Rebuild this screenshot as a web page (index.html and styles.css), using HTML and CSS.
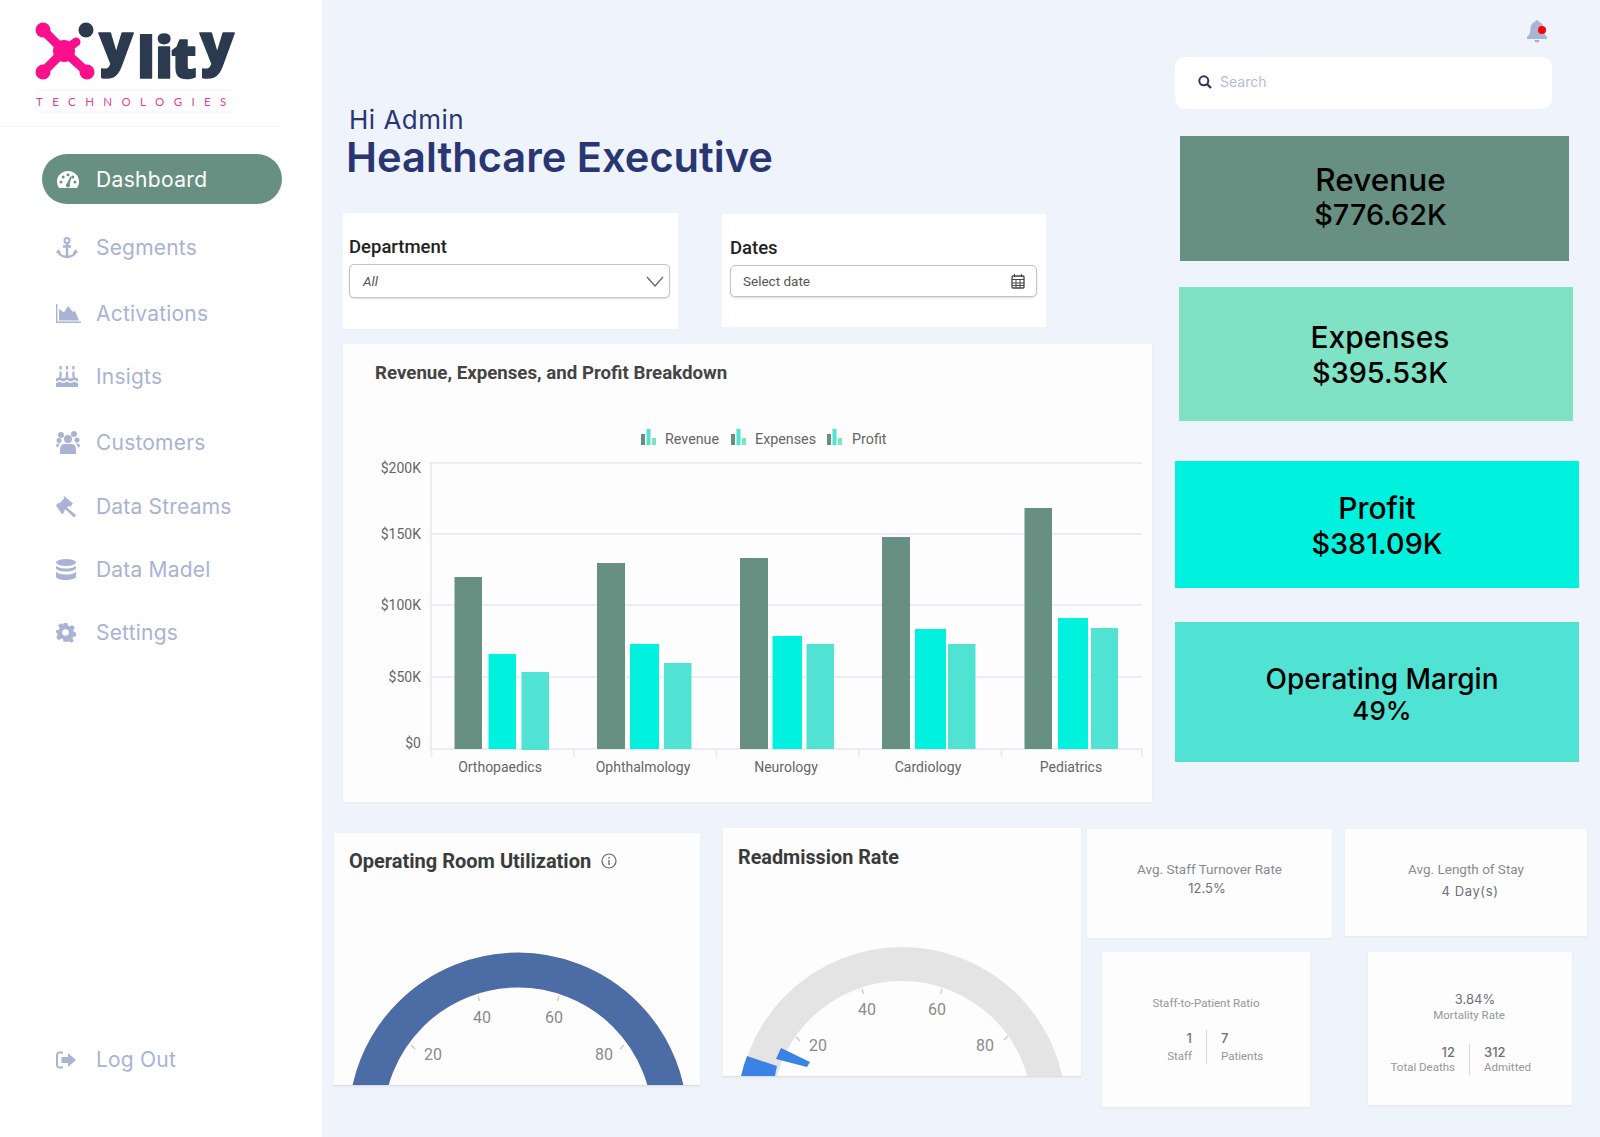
FILE: index.html
```html
<!DOCTYPE html>
<html lang="en">
<head>
  <meta charset="UTF-8">
  <meta name="viewport" content="width=device-width, initial-scale=1.0">
  <title>Healthcare Executive</title>
  <link rel="stylesheet" href="styles.css">
</head>
<body>
  <aside class="sidebar">
    <div class="logo">
      <svg class="logo-art" viewBox="0 0 280 126" width="280" height="126">
        <g stroke="#fb0f8d" stroke-linecap="round" fill="none" stroke-width="9">
          <path d="M43 30 L64 51 L43 72"/>
          <path d="M87 72 L64 51 L76 42"/>
        </g>
        <g fill="#fb0f8d">
          <circle cx="64" cy="51" r="11"/>
          <circle cx="43" cy="30" r="7.500"/>
          <circle cx="43" cy="72" r="7.500"/>
          <circle cx="87" cy="72" r="7.500"/>
        </g>
        <circle cx="86" cy="30" r="7.500" fill="#2c3a50"/>
        <text class="logo-word" x="99 137 155 171 200" y="64 78 78 78 64">ylity</text>
        <path d="M36 90 H232 M36 112 H232" stroke="#f8eef4" stroke-width="1"/>
        <text class="logo-sub" x="36" y="106">TECHNOLOGIES</text>
      </svg>
    </div>
    <ul class="nav">
      <li class="nav-item active">
        <svg class="ico" viewBox="0 0 22 17" width="22" height="17"><path fill="#fff" d="M11 0C5 0 0 4.500 0 10.500 0 12.700.7 14.800 1.800 16.500c.2.300.5.500.9.500h16.600c.4 0 .7-.2.900-.5 1.100-1.700 1.800-3.800 1.800-6C22 4.500 17 0 11 0z"/><g fill="#689082"><circle cx="4" cy="11" r="1.500"/><circle cx="6.200" cy="6" r="1.500"/><circle cx="11" cy="3.800" r="1.500"/><circle cx="15.800" cy="6" r="1.500"/><circle cx="18" cy="11" r="1.500"/><path d="M13.300 5.500l1.300.5-2 7.200a2 2 0 1 1-2.600-.6z"/></g></svg>
        <span>Dashboard</span>
      </li>
      <li class="nav-item">
        <svg class="ico" viewBox="0 0 22 22" width="22" height="22"><circle cx="11" cy="3.500" r="2.500" fill="none" stroke="currentColor" stroke-width="2"/><path fill="none" stroke="currentColor" stroke-width="2.400" d="M11 6v14M7 9.500h8M2.500 14c.5 3.700 4 6 8.500 6s8-2.300 8.500-6"/><path fill="currentColor" d="M0 16l2-4 3 3.500zM22 16l-2-4-3 3.500z"/></svg>
        <span>Segments</span>
      </li>
      <li class="nav-item">
        <svg class="ico" viewBox="0 0 25 19" width="25" height="19"><path fill="none" stroke="currentColor" stroke-width="1.400" d="M.7 0v18.300H25"/><path fill="currentColor" d="M3 16.500V5l5 3.500L12 2l5 6 2-1 4 9.500z"/></svg>
        <span>Activations</span>
      </li>
      <li class="nav-item">
        <svg class="ico" viewBox="0 0 22 21" width="22" height="21"><path fill="currentColor" d="M0 12.500c2 0 2-1.500 3.700-1.500s1.800 1.500 3.600 1.500 1.900-1.500 3.700-1.500 1.900 1.500 3.700 1.500 1.900-1.500 3.600-1.500 1.700 1.500 3.700 1.500v3c-2 0-2-1.500-3.700-1.500s-1.800 1.500-3.600 1.500-1.900-1.500-3.700-1.500-1.900 1.500-3.700 1.500-1.900-1.500-3.600-1.500S2 15.500 0 15.500zM0 17c2 0 2-1.300 3.700-1.300S5.500 17 7.300 17s1.900-1.300 3.700-1.300 1.900 1.300 3.700 1.300 1.900-1.300 3.600-1.300S20 17 22 17v4H0zM3.500 5.500h2.200V11H3.500zM9.900 5.500h2.200V11H9.900zM16.300 5.500h2.200V11h-2.200zM3.500 0h2.200v3.500H3.500zM9.900 0h2.200v3.500H9.900zM16.300 0h2.200v3.500h-2.200z"/></svg>
        <span>Insigts</span>
      </li>
      <li class="nav-item">
        <svg class="ico" viewBox="0 0 24 23" width="24" height="23"><g fill="currentColor"><circle cx="5" cy="4" r="3"/><circle cx="18" cy="3" r="3"/><circle cx="12" cy="8" r="4"/><circle cx="3" cy="9.500" r="2.500"/><circle cx="21" cy="9" r="2.500"/><path d="M4 23v-5c0-3 2-5 4-5h8c2 0 4 2 4 5v5c-2 .5-14 .5-16 0zM0 15c0-1.500 1-2.500 2.500-2.500h2c-1.500 1-2.500 2.500-2.500 4.500zM24 15c0-1.500-1-2.500-2.500-2.500h-2c1.500 1 2.500 2.500 2.500 4.500z"/></g></svg>
        <span>Customers</span>
      </li>
      <li class="nav-item">
        <svg class="ico" viewBox="0 0 22 21" width="22" height="21"><path fill="currentColor" d="M8 0l9 7.500-3 3.500-1.500-1-1.500 1.600 9 7.500-2 2.400-8.700-8.200-1.300 1.400.7 1-2.700 2.500L0 9.500l2.500-2.700 1 .7L8.500 2 7.500 1z"/></svg>
        <span>Data Streams</span>
      </li>
      <li class="nav-item">
        <svg class="ico" viewBox="0 0 20 21" width="20" height="21"><g fill="currentColor"><ellipse cx="10" cy="3.500" rx="10" ry="3.500"/><path d="M0 6c0 2 4.500 3.500 10 3.500S20 8 20 6v3c0 2-4.500 3.500-10 3.500S0 11 0 9zM0 12c0 2 4.500 3.500 10 3.500S20 14 20 12v5.500c0 2-4.500 3.500-10 3.500S0 19.500 0 17.500z"/></g></svg>
        <span>Data Madel</span>
      </li>
      <li class="nav-item">
        <svg class="ico" viewBox="0 0 20 20" width="20" height="20"><path fill="currentColor" fill-rule="evenodd" d="M8 0h4l.6 3 1.900.8L17 2.100 19.800 5l-1.700 2.500.8 1.900 2.100.6v4l-3 .6-.8 1.900 1.700 2.500L16 20.800l-2.500-1.700-1.500.9-.2-.2H8l-.6-2.600-1.900-.8-2.500 1.700L.2 15l1.700-2.500-.8-1.900L0 10V7.500l3-.5.800-1.900L2.100 2.600 5 .2l2.500 1.700z M10 6.500a3.500 3.500 0 1 0 0 7 3.500 3.500 0 0 0 0-7z" transform="scale(.95)"/></svg>
        <span>Settings</span>
      </li>
    </ul>
    <div class="nav-item logout">
      <svg class="ico" viewBox="0 0 20 20" width="20" height="20"><path fill="none" stroke="currentColor" stroke-width="2" d="M7 2.500H3.500A2.500 2.500 0 0 0 1 5v10a2.500 2.500 0 0 0 2.500 2.500H7"/><path fill="currentColor" d="M12 3l8 7-8 7v-4H5.500V7H12z"/></svg>
      <span>Log Out</span>
    </div>
  </aside>

  <main class="main">
    <div class="upper">
      <section class="left-col">
        <div class="greeting">
          <p class="hi">Hi Admin</p>
          <h1>Healthcare Executive</h1>
        </div>
        <div class="filters">
          <div class="filter filter-dept">
            <label>Department</label>
            <div class="field field-dept">
              <em>All</em>
              <svg viewBox="0 0 18 11" width="18" height="11"><path d="M1 1l8 9 8-9" fill="none" stroke="#666" stroke-width="1.300"/></svg>
            </div>
          </div>
          <div class="filter filter-date">
            <label>Dates</label>
            <div class="field field-date">
              <span>Select date</span>
              <svg viewBox="0 0 14 15" width="14" height="15"><rect x="1" y="2" width="12" height="12" rx="1" fill="none" stroke="#444" stroke-width="1.300"/><path d="M1 5.500h12M3.500 0v3M10.500 0v3M5 5.500V14M9 5.500V14M1 9h12M1 11.500h12" stroke="#444" stroke-width="1"/></svg>
            </div>
          </div>
        </div>
        <div class="card chart-card">
          <h2 class="chart-title">Revenue, Expenses, and Profit Breakdown</h2>
          <svg class="chart" viewBox="343 404 809 398" width="809" height="398">
            <g class="legend-ico">
              <g transform="translate(641 429)"><rect y="5" width="4" height="11" fill="#689082"/><rect x="5.500" width="4" height="16" fill="#50e3d3"/><rect x="11" y="9" width="4" height="7" fill="#7fe2c4"/></g>
              <g transform="translate(731 429)"><rect y="5" width="4" height="11" fill="#689082"/><rect x="5.500" width="4" height="16" fill="#50e3d3"/><rect x="11" y="9" width="4" height="7" fill="#7fe2c4"/></g>
              <g transform="translate(827 429)"><rect y="5" width="4" height="11" fill="#689082"/><rect x="5.500" width="4" height="16" fill="#50e3d3"/><rect x="11" y="9" width="4" height="7" fill="#7fe2c4"/></g>
            </g>
            <g class="legend-text">
              <text x="665" y="444">Revenue</text>
              <text x="755" y="444">Expenses</text>
              <text x="852" y="444">Profit</text>
            </g>
            <g class="grid">
              <path d="M429 463H1142M429 534H1142M429 605H1142M429 677H1142M429 749H1142M431 463V749"/>
              <path d="M431.500 749v8M574 749v8M716.500 749v8M859 749v8M1001.500 749v8M1142 749v8"/>
            </g>
            <g class="y-axis">
              <text x="421" y="473">$200K</text>
              <text x="421" y="539">$150K</text>
              <text x="421" y="610">$100K</text>
              <text x="421" y="682">$50K</text>
              <text x="421" y="748">$0</text>
            </g>
            <g class="bars-rev">
              <rect x="454.500" y="577" width="27.500" height="172"/>
              <rect x="597" y="563" width="28" height="186"/>
              <rect x="740" y="558" width="28" height="191"/>
              <rect x="882" y="537" width="28" height="212"/>
              <rect x="1024.500" y="508" width="27.500" height="241"/>
            </g>
            <g class="bars-exp">
              <rect x="488.500" y="654" width="27.500" height="95"/>
              <rect x="630" y="644" width="29" height="105"/>
              <rect x="772.500" y="636" width="29.500" height="113"/>
              <rect x="915" y="629" width="31" height="120"/>
              <rect x="1058" y="618" width="30" height="131"/>
            </g>
            <g class="bars-pro">
              <rect x="521.500" y="672" width="27.500" height="78"/>
              <rect x="664" y="663" width="27.500" height="86"/>
              <rect x="806.500" y="644" width="27.500" height="105"/>
              <rect x="948" y="644" width="27.500" height="105"/>
              <rect x="1091" y="628" width="27" height="121"/>
            </g>
            <g class="x-axis">
              <text x="500" y="772">Orthopaedics</text>
              <text x="643" y="772">Ophthalmology</text>
              <text x="786" y="772">Neurology</text>
              <text x="928" y="772">Cardiology</text>
              <text x="1071" y="772">Pediatrics</text>
            </g>
          </svg>
        </div>
      </section>

      <section class="right-col">
        <div class="bell">
          <svg viewBox="0 0 22 23" width="22" height="23"><path fill="#a9b3d3" d="M11 0c1 0 1.800.8 1.800 1.800 3 .8 4.700 3.500 4.700 6.700 0 4 1 6.300 3.500 8.500v2H1v-2c2.500-2.200 3.500-4.500 3.500-8.500 0-3.200 1.700-5.900 4.700-6.700C9.200.8 10 0 11 0zM8.500 20h5a2.500 2.500 0 0 1-5 0z"/><circle cx="16" cy="10" r="4" fill="#f00"/></svg>
        </div>
        <div class="search">
          <svg viewBox="0 0 14 14" width="14" height="14"><circle cx="5.800" cy="5.800" r="4.500" fill="none" stroke="#2f3560" stroke-width="2"/><path d="M9 9l4 4" stroke="#2f3560" stroke-width="2.400"/></svg>
          <span>Search</span>
        </div>
        <div class="kpi kpi-revenue"><div class="kpi-name">Revenue</div><div class="kpi-num">$776.62K</div></div>
        <div class="kpi kpi-expenses"><div class="kpi-name">Expenses</div><div class="kpi-num">$395.53K</div></div>
        <div class="kpi kpi-profit"><div class="kpi-name">Profit</div><div class="kpi-num">$381.09K</div></div>
        <div class="kpi kpi-margin"><div class="kpi-name">Operating Margin</div><div class="kpi-num">49%</div></div>
      </section>
    </div>

    <div class="lower">
      <div class="card gauge-card gauge-or">
        <h2>Operating Room Utilization
          <svg viewBox="0 0 16 16" width="16" height="16"><circle cx="8" cy="8" r="7" fill="none" stroke="#666" stroke-width="1.200"/><path d="M8 7v5M8 4v1.600" stroke="#666" stroke-width="1.300"/></svg>
        </h2>
        <svg class="gauge" viewBox="334 900 366 184" width="366" height="184">
          <circle cx="518" cy="1121" r="152" fill="none" stroke="#4c6ca6" stroke-width="35"/>
          <path class="tick" d="M411 1044l4 4M478 995l1.500 5M559 995l-1.500 5M624 1044l-4 4"/>
          <g class="gauge-num">
            <text x="433" y="1059">20</text>
            <text x="482" y="1022">40</text>
            <text x="554" y="1022">60</text>
            <text x="604" y="1059">80</text>
          </g>
        </svg>
      </div>
      <div class="card gauge-card gauge-re">
        <h2>Readmission Rate</h2>
        <svg class="gauge" viewBox="723 900 358 176" width="358" height="176">
          <circle cx="902" cy="1111" r="147" fill="none" stroke="#e4e4e4" stroke-width="34"/>
          <path d="M747 1056L777 1066A130 130 0 0 0 775 1076L741 1076A164 164 0 0 1 747 1056Z" fill="#3a82e4"/>
          <path d="M781 1048L810 1062L807 1067L776 1059Z" fill="#3a82e4"/>
          <path class="tick" d="M796 1037l4 4M862 989l1.500 5M942 989l-1.500 5M1008 1036l-4 4"/>
          <g class="gauge-num">
            <text x="818" y="1051">20</text>
            <text x="867" y="1015">40</text>
            <text x="937" y="1015">60</text>
            <text x="985" y="1051">80</text>
          </g>
        </svg>
      </div>
      <div class="stats">
        <div class="stat-row">
          <div class="card stat stat-turnover">
            <p class="stat-label">Avg. Staff Turnover Rate</p>
            <p class="stat-value">12.5%</p>
          </div>
          <div class="card stat stat-stay">
            <p class="stat-label">Avg. Length of Stay</p>
            <p class="stat-value stay-value">4 Day(s)</p>
          </div>
        </div>
        <div class="stat-row stat-row-low">
          <div class="card stat stat-ratio">
            <p class="small-label">Staff-to-Patient Ratio</p>
            <div class="split">
              <div class="split-l"><b>1</b><span>Staff</span></div>
              <div class="split-r"><b>7</b><span>Patients</span></div>
            </div>
          </div>
          <div class="card stat stat-mortality">
            <p class="mort-value">3.84%</p>
            <p class="small-label mort-label">Mortality Rate</p>
            <div class="split">
              <div class="split-l"><b>12</b><span>Total Deaths</span></div>
              <div class="split-r"><b>312</b><span>Admitted</span></div>
            </div>
          </div>
        </div>
      </div>
    </div>
  </main>
</body>
</html>
```

FILE: styles.css
```css
* { box-sizing: border-box; }
html, body { margin: 0; height: 1137px; overflow: hidden; }
body { display: flex; background: #eff3fb; font-family: Inter, "Noto Sans", sans-serif; color: #333; }
p, h1, h2, ul { margin: 0; padding: 0; }

/* sidebar */
.sidebar { width: 322px; height: 1137px; background: #fff; display: flex; flex-direction: column; }
.logo { height: 127px; width: 280px; border-bottom: 1px solid #f3f5fb; }
.logo-art { display: block; }
.logo-word { font-family: "Open Sans", sans-serif; font-weight: 800; font-size: 56px; fill: #2c3a50; stroke: #2c3a50; stroke-width: 1.600; stroke-linejoin: round; }
.logo-sub { font-family: Lato, sans-serif; font-size: 11.500px; letter-spacing: 9.400px; fill: #df3fa0; }
.nav { list-style: none; margin-top: 27px; }
.nav-item { display: grid; grid-template-columns: 40px 1fr; align-items: center; color: #a9b3d3; font-size: 21px; letter-spacing: .2px; height: 63px; padding-left: 56px; }
.nav-item.active { grid-template-columns: 39px 1fr; width: 240px; height: 50px; margin-left: 42px; margin-bottom: 12px; padding-left: 15px; background: #689082; color: #fff; border-radius: 25px; letter-spacing: .35px; }
.nav .nav-item:nth-child(3) { margin-top: 3px; }
.nav .nav-item:nth-child(5) { margin-top: 3px; }
.nav .nav-item:nth-child(6) { margin-top: 1px; }
.logout { margin-top: auto; margin-bottom: 46px; }

/* main area */
.main { width: 1278px; }
.upper { display: flex; height: 828px; }
.left-col { width: 809px; margin-left: 21px; }
.right-col { width: 405px; margin-left: 22px; }

.greeting { height: 213px; padding: 103px 0 0 6px; color: #2a3673; }
.hi { font-size: 26px; line-height: 34px; letter-spacing: .5px; }
h1 { font-size: 41.600px; line-height: 44px; font-weight: 600; margin: -2px 0 0 -3px; }

.filters { display: flex; align-items: flex-start; }
.filter { background: #fff; }
.filter label { display: block; font-family: Roboto, sans-serif; font-weight: 500; font-size: 18.500px; line-height: 22px; color: #222; }
.filter-dept { width: 335px; height: 116px; padding: 23px 8px 0 6px; }
.filter-date { width: 324px; height: 113px; margin-left: 44px; margin-top: 1px; padding: 23px 9px 0 8px; }
.field { display: flex; align-items: center; justify-content: space-between; border: 1px solid #c4c4c4; border-radius: 5px; background: #fff; font-family: Roboto, sans-serif; font-size: 13.500px; color: #555; box-shadow: 0 1px 2px #ddd; }
.field-dept { height: 34px; margin-top: 6px; padding: 0 5px 0 13px; }
.field-date { height: 32px; margin-top: 6px; padding: 0 11px 0 12px; }

.card { background: #fdfdfd; box-shadow: 0 1px 2px #e4e6ec; }
.chart-card { height: 458px; margin-top: 15px; }
.chart-title { height: 60px; padding: 19px 0 0 32px; font-family: Roboto, sans-serif; font-size: 18.700px; line-height: 21px; font-weight: 700; color: #444; }
.chart { display: block; font-family: Roboto, sans-serif; }
.legend-text text { font-size: 14.300px; fill: #666; }
.grid path { stroke: #ebedf0; stroke-width: 2; fill: none; }
.y-axis text { font-size: 14px; fill: #666; text-anchor: end; }
.x-axis text { font-size: 14px; fill: #666; text-anchor: middle; }
.bars-rev { fill: #689082; }
.bars-exp { fill: #00f2df; }
.bars-pro { fill: #50e3d3; }

/* right column */
.bell { height: 57px; padding: 20px 0 0 352px; }
.bell svg { display: block; }
.search { width: 377px; height: 52px; margin-left: 1px; display: flex; align-items: center; gap: 8px; padding-left: 23px; padding-bottom: 3px; background: #fff; border-radius: 10px; color: #b5bcd8; font-size: 14px; }
.kpi { display: flex; flex-direction: column; align-items: center; justify-content: center; color: #000; font-weight: 500; }
.kpi-name { font-size: 30px; line-height: 35px; }
.kpi-num { font-size: 28.800px; line-height: 35px; }
.kpi-revenue { width: 389px; height: 125px; margin: 27px 0 0 6px; padding: 0 0 4px 12px; background: #689082; }
.kpi-revenue .kpi-name { font-size: 31.500px; }
.kpi-expenses { width: 394px; height: 134px; margin: 26px 0 0 5px; padding: 2px 0 0 8px; background: #7fe2c4; }
.kpi-profit { width: 404px; height: 127px; margin: 40px 0 0 1px; padding-top: 3px; background: #00f2df; }
.kpi-margin { width: 404px; height: 140px; margin: 34px 0 0 1px; padding: 6px 0 0 10px; background: #50e3d3; }
.kpi-margin .kpi-name { font-size: 28px; line-height: 31px; }
.kpi-margin .kpi-num { font-size: 26px; line-height: 31px; }

/* bottom row */
.lower { display: flex; align-items: flex-start; margin-left: 12px; }
.gauge-card { display: flex; flex-direction: column; justify-content: space-between; border-bottom: 1px solid #dcdfe5; }
.gauge-card h2 { font-family: Roboto, sans-serif; font-size: 20px; line-height: 24px; font-weight: 700; color: #3b3b3b; display: flex; align-items: center; gap: 10px; }
.gauge { display: block; font-family: Roboto, sans-serif; }
.gauge-or { width: 366px; height: 253px; margin-top: 5px; padding-top: 16px; }
.gauge-or h2 { padding-left: 15px; }
.gauge-re { width: 358px; height: 249px; margin-left: 23px; padding-top: 18px; }
.gauge-re h2 { padding-left: 15px; font-size: 19.800px; }
.tick { stroke: #c8c8c8; stroke-width: 1.200; fill: none; }
.gauge-num text { font-size: 16px; fill: #8b8b8b; text-anchor: middle; }

.stats { margin-left: 6px; width: 500px; }
.stat-row { display: flex; align-items: flex-start; }
.stat-row-low { margin-top: 14px; }
.stat { text-align: center; color: #868b94; font-family: Roboto, sans-serif; }
.stat-turnover { width: 245px; height: 109px; margin-top: 1px; padding-top: 31px; }
.stat-stay { width: 242px; height: 107px; margin: 1px 0 0 13px; padding-top: 31px; }
.stat-label { font-size: 13.500px; line-height: 18px; }
.stat-value { font-family: Inter, sans-serif; font-size: 13px; line-height: 20px; color: #6d7178; margin-right: 5px; }
.stay-value { margin: 3px 0 0 8px; letter-spacing: .6px; }
.stat-ratio { width: 208px; height: 155px; margin-left: 15px; padding-top: 44px; }
.small-label { font-size: 11.500px; line-height: 15px; color: #93979f; }
.stat-ratio .split { margin-top: 19px; }
.stat-ratio .split span { margin-top: 3px; }
.stat-mortality { width: 204px; height: 153px; margin-left: 58px; padding-top: 39px; }
.mort-value { font-family: Inter, sans-serif; font-size: 13px; line-height: 16px; color: #6d7178; margin-left: 10px; }
.mort-label { margin: 1px 2px 0 0; }
.stat-mortality .split { margin: 21px 2px 0 0; }
.split { display: flex; justify-content: center; font-size: 11.500px; color: #93979f; }
.split b { display: block; font-family: Inter, sans-serif; font-weight: 500; font-size: 13px; line-height: 16px; color: #6d7178; }
.split span { display: block; line-height: 15px; }
.split-l { padding: 0 14px 0 0; text-align: right; width: 50%; }
.split-r { padding: 0 0 0 14px; text-align: left; width: 50%; border-left: 1px solid #d5d7dc; }
```
